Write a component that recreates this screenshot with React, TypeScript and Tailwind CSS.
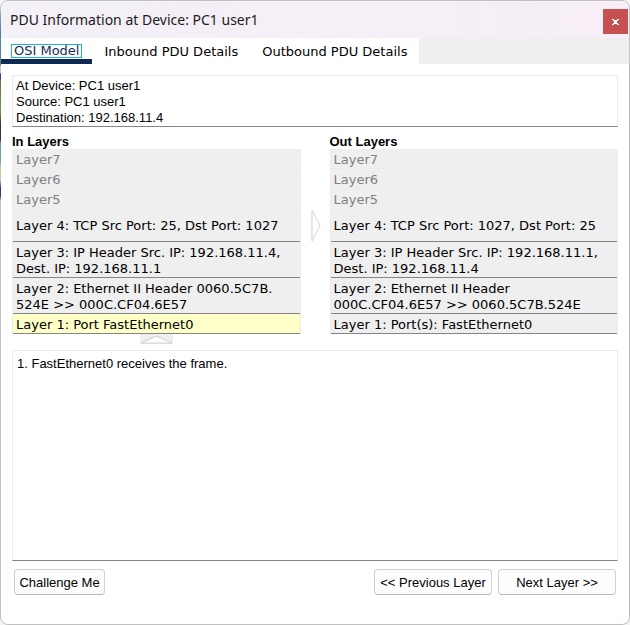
import { useState } from "react";

type Layer = { text: string; kind: "empty" | "tall" | "normal" };

const inLayers: Layer[] = [
  { text: "Layer7", kind: "empty" },
  { text: "Layer6", kind: "empty" },
  { text: "Layer5", kind: "empty" },
  { text: "Layer 4: TCP Src Port: 25, Dst Port: 1027", kind: "tall" },
  { text: "Layer 3: IP Header Src. IP: 192.168.11.4,\nDest. IP: 192.168.11.1", kind: "normal" },
  { text: "Layer 2: Ethernet II Header 0060.5C7B.\n524E >> 000C.CF04.6E57", kind: "normal" },
  { text: "Layer 1: Port FastEthernet0", kind: "normal" },
];

const outLayers: Layer[] = [
  { text: "Layer7", kind: "empty" },
  { text: "Layer6", kind: "empty" },
  { text: "Layer5", kind: "empty" },
  { text: "Layer 4: TCP Src Port: 1027, Dst Port: 25", kind: "tall" },
  { text: "Layer 3: IP Header Src. IP: 192.168.11.1,\nDest. IP: 192.168.11.4", kind: "normal" },
  { text: "Layer 2: Ethernet II Header\n000C.CF04.6E57 >> 0060.5C7B.524E", kind: "normal" },
  { text: "Layer 1: Port(s): FastEthernet0", kind: "normal" },
];

const kindClass = {
  empty: "h-5 pt-[3px] border-[#ebebeb] text-[#808080]",
  tall: "h-[33px] pt-[2px] border-[#858585] text-black",
  normal: "pt-[3px] border-[#858585] text-black",
};

const tabs = ["OSI Model", "Inbound PDU Details", "Outbound PDU Details"];

function LayerColumn({
  title,
  layers,
  selected,
}: {
  title: string;
  layers: Layer[];
  selected?: number;
}) {
  return (
    <section className="min-w-0 flex-1">
      <h2 className="h-4 font-['Liberation_Sans',sans-serif] text-[13px] leading-[18px] font-bold">{title}</h2>
      <div className="border-x border-[#ebebeb]">
        {layers.map((layer, i) => (
          <button
            key={layer.text}
            type="button"
            disabled={layer.kind === "empty"}
            className={`flex w-full items-center border-b pl-[3px] text-left text-[13px] leading-4 whitespace-pre ${kindClass[layer.kind]} ${i === selected ? "bg-[#ffffc8]" : "bg-[#efefef]"}`}
          >
            {layer.text}
          </button>
        ))}
      </div>
    </section>
  );
}

function PushButton({ label, width }: { label: string; width: string }) {
  return (
    <button
      type="button"
      className={`h-[26px] rounded-[4px] border border-[#d0d0d0] border-b-[#b8b8b8] bg-[#fdfdfd] pt-[2px] font-['Liberation_Sans',sans-serif] text-[13px] leading-4 whitespace-nowrap ${width}`}
    >
      {label}
    </button>
  );
}

export default function App() {
  const [tab, setTab] = useState(0);
  return (
    <div className="relative bg-[#f4f4f4]">
      {/* sliver of the desktop behind the window */}
      <div className="absolute top-3 left-0 h-[188px] w-px bg-[linear-gradient(#8fb0ba_0px,#4d8298_20px,#5a8797_53px,#c8c8d0_54px,#c8c8d0_61px,#503070_62px,#503070_66px,#5d7a48_70px,#6f9a50_100px,#3a3434_112px,#3a3434_128px,#6a98a8_130px,#7ba3ae_150px,#c8c8c8_156px,#d8c080_162px,#c8c8c8_168px,#503060_176px,#503060_184px,#c0c0c0_188px)]" />
      <main className="flex min-h-screen flex-col overflow-hidden rounded-lg border border-[#c0c0c0] bg-white font-['DejaVu_Sans',sans-serif] text-black">
        <header className="flex h-[37px] items-center justify-between bg-gradient-to-r from-[#f3f0f7] to-[#f7eef7] pl-[9px]">
          <h1 className="font-['Noto_Sans',sans-serif] text-sm text-[#1b1b1b]">
            PDU Information at Device: PC1 user1
          </h1>
          <button
            type="button"
            aria-label="Close"
            className="mt-1 mr-px flex size-[25px] items-center justify-center bg-[#c75050]"
          >
            <svg width="7" height="6" viewBox="0 0 7 6" shapeRendering="crispEdges" fill="#fff">
              <path d="M0 0h2v1h3V0h2v1H6v1H5v2h1v1h1v1H5V5H2v1H0V5h1V4h1V2H1V1H0z" />
            </svg>
          </button>
        </header>

        <nav className="flex h-[26px] bg-[#efefef]">
          {tabs.map((name, i) => (
            <button
              key={name}
              type="button"
              onClick={() => setTab(i)}
              className={`flex items-start border-b-[5px] bg-white pt-[6px] text-[13px] leading-4 whitespace-nowrap ${i === tab ? "min-w-[91px] border-[#0f2a52] px-[10px] text-[#1c2c50]" : "border-white px-3"}`}
            >
              <span className={i === tab ? "flex h-[14px] items-center border border-[#18b4e4] px-[2px]" : ""}>
                {name}
              </span>
            </button>
          ))}
        </nav>

        <div className="flex flex-1 flex-col px-[11px] pt-[11px] pb-[29px]">
          <div className="border border-[#ebebeb] border-b-[#858585] pt-[2px] pl-[3px] font-['Liberation_Sans',sans-serif] text-[13px] leading-4">
            <p>At Device: PC1 user1</p>
            <p>Source: PC1 user1</p>
            <p>Destination: 192.168.11.4</p>
          </div>

          <div className="mt-[6px] flex">
            <LayerColumn title="In Layers" layers={inLayers} selected={6} />
            <div className="flex w-[29px] justify-center pt-[76px] pl-[2px]">
              <svg width="10" height="33" viewBox="0 0 10 33" fill="none">
                <path d="M1 1V32L9 16.500Z" fill="#fff" stroke="#d2d2d2" />
              </svg>
            </div>
            <LayerColumn title="Out Layers" layers={outLayers} />
          </div>

          <div className="flex pr-[317px]">
            <svg className="mx-auto" width="33" height="10" viewBox="0 0 33 10">
              <path d="M0 0H33V10H0z" fill="#efefef" />
              <path d="M1 9L16.500 2L32 9Z" fill="#fff" stroke="#cfcfcf" />
            </svg>
          </div>

          <div className="mt-[6px] flex-1 border border-[#ebebeb] border-b-[#858585] px-1 pt-[5px] font-['Liberation_Sans',sans-serif] text-[13px] leading-4">
            <p>1. FastEthernet0 receives the frame.</p>
          </div>

          <div className="mt-2 flex gap-[6px] px-[2px]">
            <PushButton label="Challenge Me" width="mr-auto w-[91px]" />
            <PushButton label="<< Previous Layer" width="w-[118px]" />
            <PushButton label="Next Layer >>" width="w-[118px]" />
          </div>
        </div>
      </main>
    </div>
  );
}
